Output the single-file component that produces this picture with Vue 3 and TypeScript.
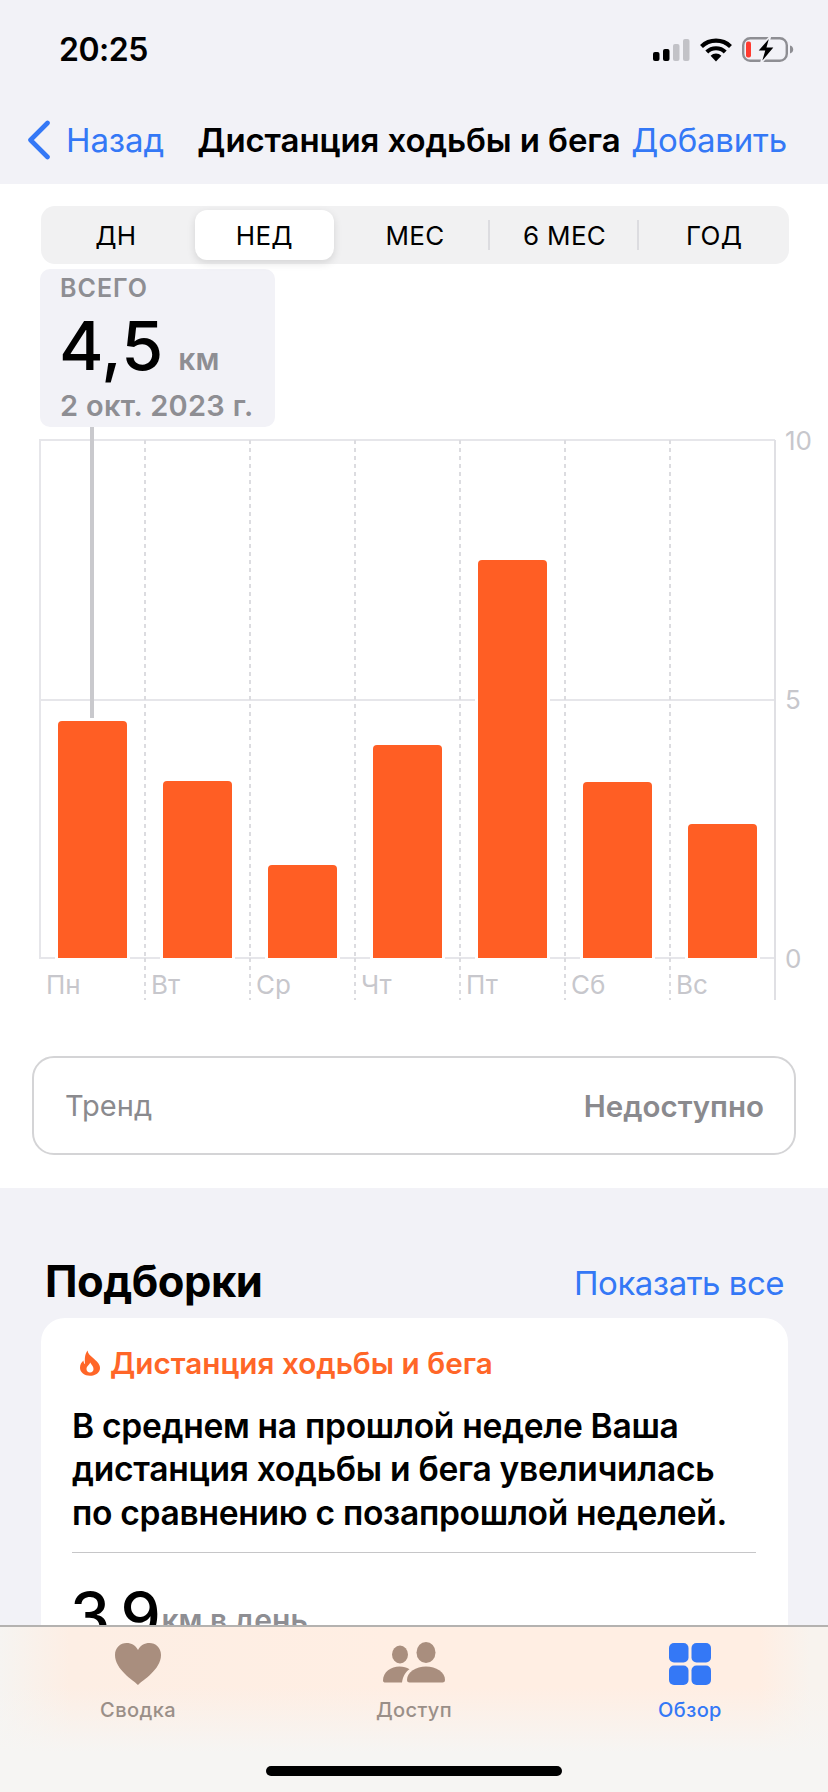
<script setup lang="ts">
interface Bar { day: string; height: number }
const segments: string[] = ['ДН', 'НЕД', 'МЕС', '6 МЕС', 'ГОД']
const bars: Bar[] = [
  { day: 'Пн', height: 237 },
  { day: 'Вт', height: 177 },
  { day: 'Ср', height: 93 },
  { day: 'Чт', height: 213 },
  { day: 'Пт', height: 398 },
  { day: 'Сб', height: 176 },
  { day: 'Вс', height: 134 },
]
</script>

<template>
  <div class="screen">
    <div class="scroll">
      <header class="top">
        <div class="status">
          <span class="time">20:25</span>
          <svg class="status-icons" width="150" height="30" viewBox="0 0 150 30">
            <rect x="3" y="17" width="6.5" height="9" rx="2" fill="#000" />
            <rect x="13" y="14" width="6.5" height="12" rx="2" fill="#000" />
            <rect x="23" y="9" width="6.5" height="17" rx="2" fill="#c2c2c7" />
            <rect x="33" y="4" width="6.5" height="22" rx="2" fill="#c2c2c7" />
            <path d="M51.5 11.5A21 21 0 0 1 80.5 11.5" fill="none" stroke="#000" stroke-width="4.2" />
            <path d="M56.8 17A13.2 13.2 0 0 1 75.2 17" fill="none" stroke="#000" stroke-width="4.2" />
            <path d="M66 26.5l-5.4-5.7a7.6 7.6 0 0 1 10.8 0z" fill="#000" />
            <rect x="93.2" y="3.2" width="43.6" height="22.6" rx="7" fill="none" stroke="#8e8e93" stroke-width="2.4" />
            <path d="M140 10.5c2.2.6 3.2 2.2 3.2 4s-1 3.400-3.200 4z" fill="#8e8e93" />
            <rect x="96" y="6.500" width="5" height="16" rx="2" fill="#ff3b30" />
            <path d="M120.500 1 107 16.200h7.200L110.500 29 125 11.800h-7.500z" fill="#000" stroke="#f2f2f7" stroke-width="1.600" />
          </svg>
        </div>
        <nav class="nav">
          <div class="back">
            <svg width="26" height="40" viewBox="0 0 26 40">
              <path d="M21.500 3 4.500 20l17 17" fill="none" stroke="#3478f6" stroke-width="4.600" stroke-linecap="round" stroke-linejoin="round" />
            </svg>
            <span>Назад</span>
          </div>
          <span class="title">Дистанция ходьбы и бега</span>
          <span class="add">Добавить</span>
        </nav>
      </header>

      <section class="detail">
        <div class="segments">
          <div v-for="(s, i) in segments" :key="s" class="seg" :class="{ active: i === 1, sep: i === 2 || i === 3 }">
            <span>{{ s }}</span>
          </div>
        </div>

        <div class="tip">
          <div class="tip-label">ВСЕГО</div>
          <div class="tip-value">4,5 <small>км</small></div>
          <div class="tip-date">2 окт. 2023 г.</div>
        </div>

        <div class="chart">
          <div class="plot-area">
            <div class="plot">
              <i class="grid g-top"></i>
              <i class="grid g-mid"></i>
              <i class="grid g-bot"></i>
              <i class="left-line"></i>
              <div v-for="(b, i) in bars" :key="b.day" class="col">
                <div v-if="i === 0" class="rule"></div>
                <div class="bar" :style="{ height: b.height + 'px' }"></div>
              </div>
            </div>
            <div class="days">
              <div v-for="b in bars" :key="b.day" class="col day">{{ b.day }}</div>
            </div>
          </div>
          <div class="yaxis">
            <span>10</span>
            <span>5</span>
            <span>0</span>
          </div>
        </div>

        <div class="trend">
          <span class="trend-l">Тренд</span>
          <span class="trend-r">Недоступно</span>
        </div>
      </section>

      <section class="highlights">
        <div class="hl-head">
          <h2>Подборки</h2>
          <span>Показать все</span>
        </div>
        <article class="card">
          <div class="card-head">
            <svg width="22" height="26" viewBox="0 0 22 26">
              <path fill-rule="evenodd" fill="#ff6628" d="M8.500 0.500c.6 3.200 2.500 4.800 5.300 7.300 3 2.700 7.200 6 7.200 10.100C21 22.500 16.500 25.800 11 25.800S1 22.500 1 17.800c0-3 1.400-5.700 3.500-7.300-.1 1.500.4 2.900 1.600 3.700C5.500 9 5.800 4 8.500 .5zM11.200 12.500c-.5 2-3.700 3.500-3.700 6.500 0 2.200 1.500 3.500 3.500 3.500s3.500-1.300 3.500-3.500c0-2.800-2.300-4.500-3.300-6.500z" />
            </svg>
            <span>Дистанция ходьбы и бега</span>
          </div>
          <p class="card-body">В среднем на прошлой неделе Ваша<br />дистанция ходьбы и бега увеличилась<br />по сравнению с позапрошлой неделей.</p>
          <div class="divider"></div>
          <div class="metric"><b>3,9</b><span>км в день</span></div>
        </article>
      </section>
    </div>

    <footer class="tabbar">
      <div class="tabs">
        <div class="tab">
          <svg width="46" height="44" viewBox="0 0 46 44">
            <path fill="#a98e7e" d="M23 43C18 38 0 27.500 0 13 0 5.500 5.500 1 11.500 1 16.500 1 20.800 3.600 23 8 25.200 3.600 29.500 1 34.500 1 40.500 1 46 5.500 46 13 46 27.500 28 38 23 43z" />
          </svg>
          <span>Сводка</span>
        </div>
        <div class="tab">
          <svg width="62" height="44" viewBox="0 0 62 44">
            <ellipse cx="17" cy="12.500" rx="8" ry="9" fill="#a98e7e" />
            <ellipse cx="43" cy="10.500" rx="9.500" ry="10.500" fill="#a98e7e" />
            <path fill="#a98e7e" d="M0 38.500C0 30 8 24.500 16.500 24.500c4 0 7 .9 10 2.800-4 2.800-6.500 6.700-7.500 13.200H2.500C1 40.500 0 40 0 38.500z" />
            <path fill="#a98e7e" d="M24 38C24 30 33 24.500 43 24.500S62 30 62 38c0 1.700-1 2.500-2.500 2.500h-33C25 40.500 24 39.700 24 38z" />
          </svg>
          <span>Доступ</span>
        </div>
        <div class="tab on">
          <svg width="42" height="44" viewBox="0 0 42 44">
            <rect x="0" y="1" width="19.500" height="19.500" rx="5" fill="#3478f6" />
            <rect x="22.500" y="1" width="19.500" height="19.500" rx="5" fill="#3478f6" />
            <rect x="0" y="23.500" width="19.500" height="19.500" rx="5" fill="#3478f6" />
            <rect x="22.500" y="23.500" width="19.500" height="19.500" rx="5" fill="#3478f6" />
          </svg>
          <span>Обзор</span>
        </div>
      </div>
      <div class="home"></div>
    </footer>
  </div>
</template>

<style scoped>
.screen {
  width: 828px;
  height: 1792px;
  display: flex;
  flex-direction: column;
  overflow: hidden;
  background: #f2f2f7;
  font-family: Inter, "Noto Sans", sans-serif;
  color: #000;
}
.scroll {
  flex: 1;
  min-height: 0;
  overflow: hidden;
}

/* header */
.top {
  height: 184px;
  background: #f2f2f7;
}
.status {
  height: 100px;
  display: flex;
  justify-content: space-between;
  padding: 35px 28px 0 59px;
  box-sizing: border-box;
}
.time {
  font-size: 32px;
  font-weight: 600;
  line-height: 30px;
  letter-spacing: -0.5px;
}
.status-icons {
  display: block;
}
.nav {
  height: 80px;
  padding: 0 41px 0 26px;
  display: flex;
  align-items: center;
  font-size: 33px;
  letter-spacing: -0.1px;
}
.back {
  display: flex;
  align-items: center;
  gap: 14px;
  width: 173px;
  color: #3478f6;
}
.title {
  font-weight: 600;
  width: 438px;
  white-space: nowrap;
}
.add {
  color: #3478f6;
  letter-spacing: -0.2px;
}

/* detail */
.detail {
  background: #fff;
  padding: 22px 0 33px;
}
.segments {
  margin: 0 39px 0 41px;
  height: 58px;
  padding: 4px 0;
  box-sizing: border-box;
  border-radius: 14px;
  background: #f1f1f2;
  display: grid;
  grid-template-columns: repeat(5, 1fr);
  font-size: 26px;
  letter-spacing: 0.3px;
}
.seg {
  position: relative;
  display: flex;
  align-items: center;
  justify-content: center;
  border-radius: 12px;
}
.seg.active {
  background: #fff;
  margin: 0 6px 0 4px;
  box-shadow: 0 3px 8px rgba(0, 0, 0, 0.12);
}
.seg.sep::after {
  content: "";
  position: absolute;
  right: 0;
  top: 10px;
  bottom: 10px;
  width: 2px;
  background: #dcdce0;
}
.tip {
  margin: 5px 0 0 40px;
  width: 235px;
  height: 158px;
  box-sizing: border-box;
  padding: 5px 0 0 20px;
  border-radius: 10px;
  background: #f2f2f7;
  color: #8e8e93;
}
.tip-label {
  font-size: 25px;
  font-weight: 600;
  line-height: 28px;
  letter-spacing: 1px;
}
.tip-value {
  margin: 8px 0 0 -1px;
  color: #000;
  font-size: 68px;
  font-weight: 500;
  line-height: 70px;
  white-space: nowrap;
}
.tip-value small {
  color: #8e8e93;
  font-size: 30px;
  font-weight: 600;
  line-height: 1;
  margin-left: -3px;
}
.tip-date {
  margin-top: 8px;
  font-size: 29px;
  font-weight: 600;
  line-height: 36px;
  letter-spacing: 0.3px;
  white-space: nowrap;
}

/* chart */
.chart {
  margin: 13px 0 0 40px;
  display: flex;
}
.plot-area {
  width: 735px;
}
.plot {
  position: relative;
  height: 518px;
  display: grid;
  grid-template-columns: repeat(7, 105px);
}
.grid {
  position: absolute;
  left: -1px;
  right: 0;
  height: 2px;
  background: #e6e6ea;
}
.g-top { top: -1px; }
.g-mid { top: 259px; }
.g-bot { bottom: -1px; }
.left-line {
  position: absolute;
  left: -1px;
  top: 0;
  bottom: 0;
  width: 2px;
  background: #e6e6ea;
}
.col {
  position: relative;
  display: flex;
  flex-direction: column;
  justify-content: flex-end;
  align-items: center;
}
.col::after {
  content: "";
  position: absolute;
  top: 0;
  bottom: 0;
  right: -1px;
  width: 2px;
  background: linear-gradient(#dcdce0 0 4px, transparent 4px 8px) 0 0 / 2px 8px repeat-y;
}
.col:last-child::after {
  background: #e0e0e4;
}
.bar {
  width: 69px;
  background: #ff5e24;
  border-radius: 4px 4px 0 0;
  box-shadow: 0 0 0 3px #fff;
}
.rule {
  position: absolute;
  left: 50px;
  bottom: 240px;
  width: 4px;
  height: 291px;
  background: #c9c9cd;
}
.days {
  height: 42px;
  display: grid;
  grid-template-columns: repeat(7, 105px);
}
.day {
  display: block;
  padding: 12px 0 0 6px;
  box-sizing: border-box;
  font-size: 26px;
  line-height: 30px;
  color: #c7c7cc;
}
.yaxis {
  height: 518px;
  margin-left: 10px;
  display: flex;
  flex-direction: column;
  justify-content: space-between;
  font-size: 26px;
  color: #c7c7cc;
}
.yaxis span {
  height: 0;
  line-height: 0;
  transform: translateY(1px);
}

/* trend */
.trend {
  margin: 56px 32px 0;
  height: 99px;
  box-sizing: border-box;
  border: 2px solid #d4d4d6;
  border-radius: 22px;
  padding: 0 30px 0 31px;
  display: flex;
  justify-content: space-between;
  align-items: center;
  font-size: 29px;
  color: #8a8a8e;
}
.trend-r {
  font-size: 29.5px;
  font-weight: 600;
}

/* highlights */
.highlights {
  padding: 68px 40px 0 41px;
}
.hl-head {
  height: 50px;
  margin-bottom: 12px;
  padding: 0 4px 0 4px;
  display: flex;
  justify-content: space-between;
  align-items: center;
}
.hl-head h2 {
  margin: 0;
  font-size: 43.5px;
  font-weight: 700;
  letter-spacing: -0.5px;
}
.hl-head span {
  color: #3478f6;
  font-size: 33px;
  margin-top: 4px;
  letter-spacing: -0.5px;
}
.card {
  background: #fff;
  border-radius: 24px;
  padding: 26px 32px 0 31px;
  height: 400px;
}
.card-head {
  height: 38px;
  display: flex;
  align-items: center;
  gap: 9px;
  margin-left: 7px;
  color: #ff6628;
  font-size: 29.7px;
  font-weight: 600;
  white-space: nowrap;
}
.card-body {
  margin: 22px 0 0;
  font-size: 33.6px;
  font-weight: 600;
  line-height: 43.4px;
  letter-spacing: -0.3px;
  white-space: nowrap;
}
.divider {
  height: 1px;
  margin-top: 18px;
  background: #c6c6c8;
}
.metric {
  margin: 28px 0 0 -2px;
  display: flex;
  align-items: flex-start;
  gap: 4px;
  line-height: 70px;
}
.metric b {
  font-size: 64px;
  font-weight: 500;
  letter-spacing: -3.5px;
}
.metric span {
  margin-top: 21px;
  font-size: 30px;
  font-weight: 600;
  line-height: 36px;
  color: #8e8e93;
}

/* tab bar */
.tabbar {
  height: 167px;
  flex-shrink: 0;
  box-sizing: border-box;
  border-top: 2px solid #b4b2b0;
  background:
    linear-gradient(rgba(246, 245, 243, 0) 0, rgba(246, 245, 243, 0) 60px, #f6f5f3 125px),
    linear-gradient(90deg, #f6f4f1 0, #fdeee4 70px, #ffeee3 400px, #ffeee3 760px, #f8f3ee 810px);
  position: relative;
}
.tabs {
  display: grid;
  grid-template-columns: repeat(3, 276px);
  padding-top: 15px;
}
.tab {
  display: flex;
  flex-direction: column;
  align-items: center;
  color: #9a8f88;
  font-size: 20px;
  font-weight: 500;
  letter-spacing: 0.4px;
}
.tab svg {
  display: block;
  margin-bottom: 11px;
}
.tab span {
  line-height: 26px;
}
.tab.on {
  color: #3478f6;
}
.home {
  position: absolute;
  left: 266px;
  bottom: 16px;
  width: 296px;
  height: 10px;
  border-radius: 5px;
  background: #000;
}
</style>

<style>
html, body {
  margin: 0;
  background: #fff;
}
</style>
